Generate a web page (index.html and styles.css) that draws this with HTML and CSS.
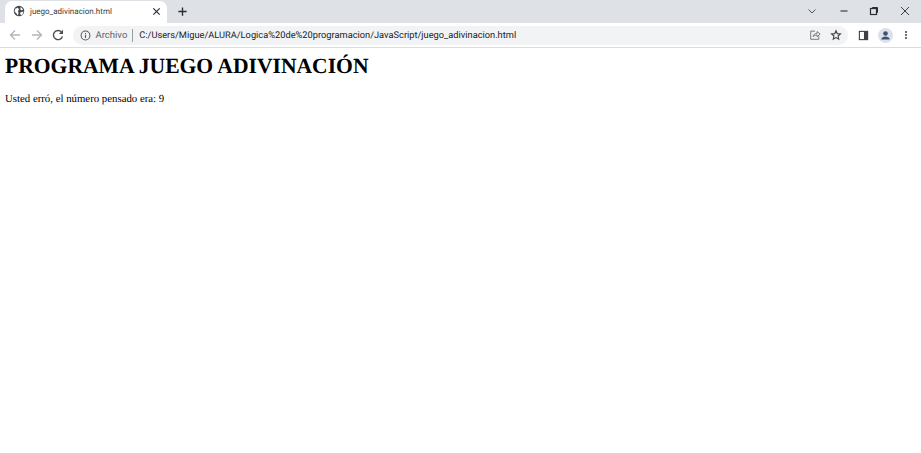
FILE: index.html
```html
<!DOCTYPE html>
<html lang="es">
<head>
    <meta charset="UTF-8">
    <title>juego_adivinacion.html</title>
    <link rel="stylesheet" href="styles.css">
</head>
<body>
    <div class="tabstrip">
        <div class="tab">
            <svg class="favicon" viewBox="0 0 16 16"><circle cx="8" cy="8" r="7" fill="#45494f"/><path d="M3 5 6.5 3.5 8 6 6.5 8 7.5 10.5 6.5 14 4.5 11 2 8.5ZM10.5 2.5 13.5 6 11.5 7 9.5 5.5ZM10 9.5 14 8.5 13 12 11 13.5 9.5 12Z" fill="#fff"/></svg>
            <span class="tab-title">juego_adivinacion.html</span>
            <svg class="tab-close" viewBox="0 0 10 10"><path d="M1.5 1.5 8.5 8.5M8.5 1.5 1.5 8.5" stroke="#2b2d30" stroke-width="1.3"/></svg>
        </div>
        <svg class="new-tab" viewBox="0 0 12 12"><path d="M6 1.5V10.5M1.5 6H10.5" stroke="#2b2d30" stroke-width="1.5"/></svg>
        <div class="window-controls">
            <svg class="win-btn" viewBox="0 0 10 10"><path d="M1.5 3.5 5 7 8.5 3.5" fill="none" stroke="#50535a" stroke-width="1"/></svg>
            <svg class="win-btn" viewBox="0 0 10 10"><path d="M1.5 5H8.5" stroke="#3c3f44" stroke-width="1.2"/></svg>
            <svg class="win-btn" viewBox="0 0 10 10"><path d="M3.5 2.5V1.5H8.5V6.5H7.5" fill="none" stroke="#2b2d30"/><rect x="1.5" y="2.5" width="6" height="6" fill="none" stroke="#2b2d30" stroke-width="1.2"/></svg>
            <svg class="win-btn" viewBox="0 0 10 10"><path d="M1 1 9 9M9 1 1 9" stroke="#3c3f44" stroke-width="1"/></svg>
        </div>
    </div>

    <div class="toolbar">
        <svg class="nav-icon" viewBox="0 0 14 14"><path d="M12 7H2.5M7 2.5 2.5 7 7 11.5" fill="none" stroke="#b4b7bb" stroke-width="1.4"/></svg>
        <svg class="nav-icon" viewBox="0 0 14 14"><path d="M2 7H11.5M7 2.5 11.5 7 7 11.5" fill="none" stroke="#b4b7bb" stroke-width="1.4"/></svg>
        <svg class="nav-icon" viewBox="0 0 14 14"><path d="M11.4 8.5A4.6 4.6 0 1 1 10.3 3.8" fill="none" stroke="#4a4d52" stroke-width="1.4"/><path d="M12 1.8V6H7.8Z" fill="#4a4d52"/></svg>
        <div class="omnibox">
            <svg class="info-icon" viewBox="0 0 12 12"><circle cx="6" cy="6" r="4.8" fill="none" stroke="#55585d" stroke-width="1.1"/><path d="M6 5.2V8.8M6 3.2V4.3" stroke="#55585d" stroke-width="1.2"/></svg>
            <span class="security">Archivo</span>
            <span class="divider"></span>
            <span class="url">C:/Users/Migue/ALURA/Logica%20de%20programacion/JavaScript/juego_adivinacion.html</span>
            <svg class="omni-icon share" viewBox="0 0 14 14"><path d="M7 2.5H2V12H11.5V8.5" fill="none" stroke="#65686d" stroke-width="1"/><path d="M4.8 9C5.2 6.5 7 5 9.5 5V3L13 6 9.5 9V7C7.5 7 6 7.6 4.8 9Z" fill="none" stroke="#65686d" stroke-width="1"/></svg>
            <svg class="omni-icon" viewBox="0 0 14 14"><path d="M7 2 8.5 5.4 12.2 5.8 9.4 8.2 10.2 11.9 7 10 3.8 11.9 4.6 8.2 1.8 5.8 5.5 5.4Z" fill="none" stroke="#3f4247" stroke-width="1.3"/></svg>
        </div>
        <svg class="side-icon" viewBox="0 0 12 12"><rect x="1.5" y="1.5" width="9" height="9" fill="none" stroke="#3c3f44" stroke-width="1.2"/><rect x="6.5" y="1.5" width="4" height="9" fill="#3c3f44"/></svg>
        <div class="avatar">
            <svg viewBox="0 0 14 14"><circle cx="7" cy="4.8" r="2.5" fill="#3e5272"/><path d="M2.4 11.2C2.8 9 5 8.2 7 8.2S11.2 9 11.6 11.2Z" fill="#3e5272"/></svg>
        </div>
        <div class="menu-dots"><span></span><span></span><span></span></div>
    </div>

    <main class="page">
        <h1>PROGRAMA JUEGO ADIVINACIÓN</h1>
        <p>Usted erró, el número pensado era: 9</p>
    </main>
</body>
</html>
```

FILE: styles.css
```css
* { box-sizing: border-box; }
body { margin: 0; background: #fff; font-family: "Liberation Serif", serif; text-rendering: geometricPrecision; overflow: hidden; }
svg { display: block; flex: none; }

.tabstrip { display: flex; align-items: flex-end; height: 23px; padding-left: 5px; background: #dee1e6; }
.tab { display: flex; align-items: center; width: 162px; height: 22px; padding: 0 6px 2px 8px; background: #fff; border-radius: 7px 7px 0 0; }
.favicon { width: 12px; height: 12px; }
.tab-title { flex: 1; margin-left: 5px; font: 8px Roboto, sans-serif; color: #3c4043; }
.tab-close { width: 9px; height: 9px; }
.new-tab { width: 11px; height: 11px; margin: 0 0 6px 10px; }

.window-controls { display: flex; margin: 0 0 7px auto; padding-right: 11px; gap: 21px; }
.win-btn { width: 10px; height: 10px; }
.win-btn:nth-child(2) { margin-left: 1px; margin-right: -1px; }

.toolbar { display: flex; align-items: center; height: 25px; padding-left: 8px; background: #fff; border-bottom: 1px solid #dadce0; }
.nav-icon { width: 14px; height: 14px; margin-right: 7.5px; }
.omnibox { display: flex; align-items: center; width: 775px; height: 19px; padding: 0 5px 0 7px; background: #f1f3f4; border-radius: 10px; }
.info-icon { width: 11px; height: 11px; }
.security { margin-left: 5px; font: 9.5px Roboto, sans-serif; color: #5f6368; }
.divider { width: 1px; height: 13px; margin: 0 6px 0 5px; background: #9a9da1; }
.url { flex: 1; font: 9.27px Roboto, sans-serif; color: #202124; white-space: nowrap; }
.omni-icon { width: 12px; height: 12px; }
.share { margin-right: 9px; }
.omni-icon:last-child { margin-right: 1px; }
.side-icon { width: 11px; height: 11px; margin-left: 10px; }
.avatar { display: flex; align-items: center; justify-content: center; width: 15px; height: 15px; margin-left: 9px; background: #dbe1ea; border-radius: 50%; }
.avatar svg { width: 13px; height: 13px; }
.menu-dots { display: flex; flex-direction: column; gap: 1px; margin-left: 12px; }
.menu-dots span { width: 2px; height: 2px; background: #3c4043; border-radius: 50%; }

.page { padding: 6px 5px 5px; color: #000; }
h1 { margin: 0; font-size: 21.6px; line-height: 25px; font-weight: bold; }
p { margin: 14px 0 0; font-size: 10.8px; line-height: 13px; }
```
